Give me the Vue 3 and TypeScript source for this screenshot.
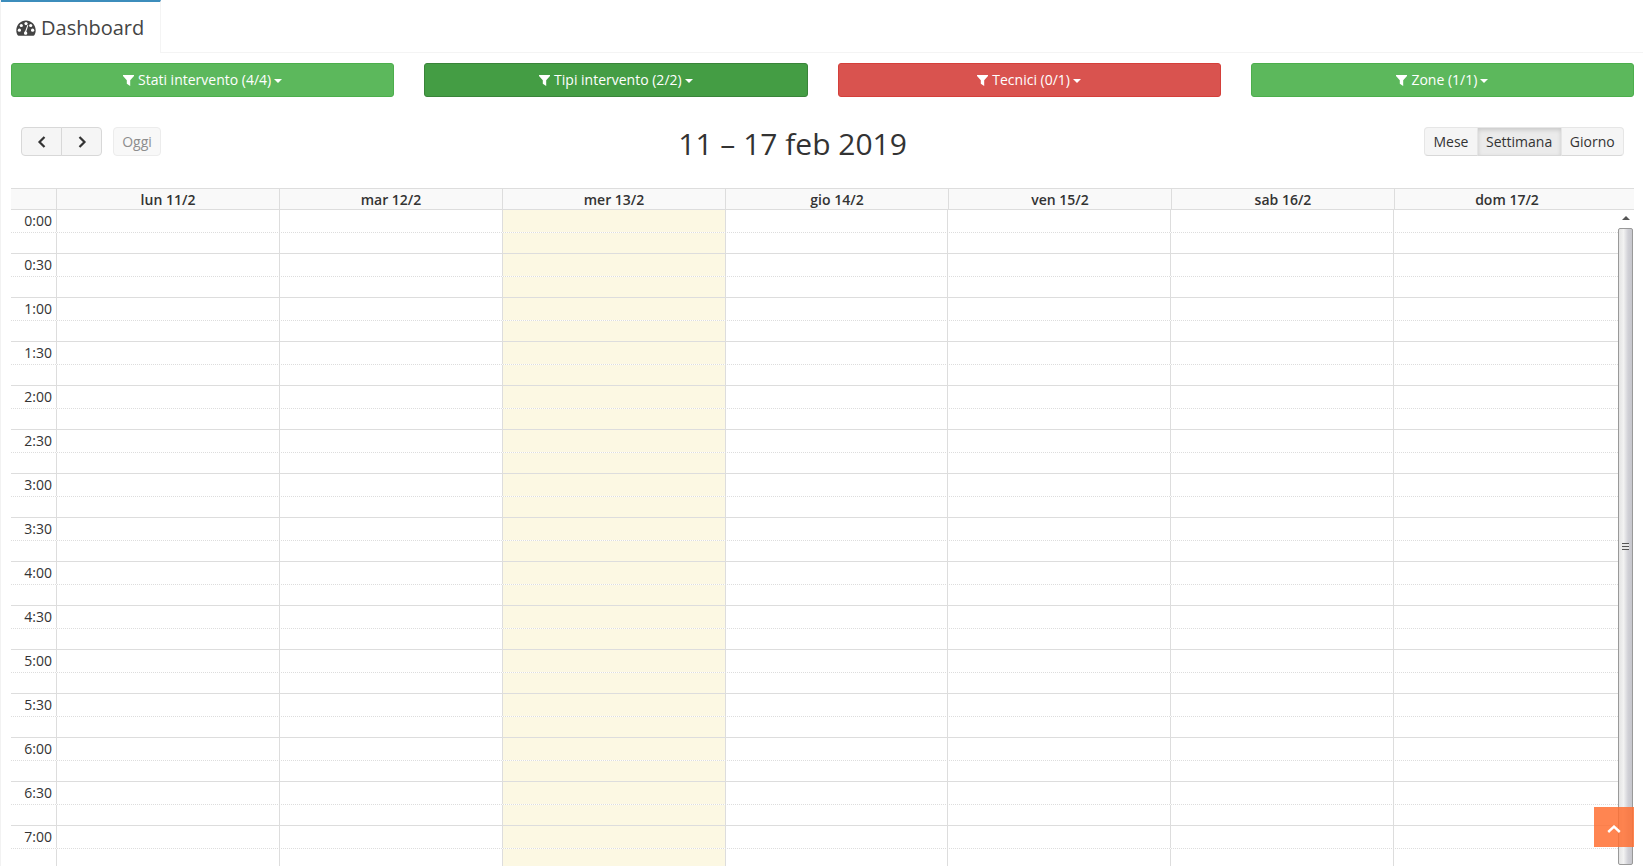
<template>
	<div class="page">
		<div class="tabs">
			<div class="tab">
				<svg class="dash-icon" viewBox="0 0 20 16" width="20" height="16">
					<path d="M10 0.5C4.6 0.5 0.3 4.8 0.3 10.2c0 1.9.5 3.6 1.4 5.1.2.3.5.4.8.4h15c.3 0 .6-.1.8-.4.9-1.5 1.4-3.2 1.4-5.1C19.7 4.8 15.4.5 10 .5z" fill="#444" />
					<g fill="#fff">
						<circle cx="10" cy="3.6" r="1.6" />
						<circle cx="5.3" cy="5.5" r="1.6" />
						<circle cx="3.4" cy="10.2" r="1.6" />
						<circle cx="16.6" cy="10.2" r="1.6" />
						<circle cx="14.7" cy="5.5" r="1.6" />
						<path d="M9.1 11.2 11.4 5l.9.3-2 6.2c.6.4 1 1 1 1.7 0 .9-.6 1.5-1.4 1.6-1.1.1-1.9-.6-1.9-1.6 0-.9.6-1.6 1.1-2z" />
					</g>
				</svg>
				<span>Dashboard</span>
			</div>
		</div>

		<div class="filters">
			<button v-for="f in filters" :key="f.label" class="filter-btn" :class="f.color">
				<svg viewBox="0 0 11 11" width="11" height="11" class="funnel">
					<path d="M0 0h11v1L7.2 5.2V11L3.8 8.8V5.2L0 1z" fill="#fff" />
				</svg>
				<span>{{ f.label }}</span>
				<i class="caret"></i>
			</button>
		</div>

		<div class="toolbar">
			<div class="toolbar-left">
				<div class="btn-group">
					<button class="fc-btn nav-btn">
						<svg viewBox="0 0 10 12" width="10" height="12"><path d="M7.5 1 2.5 6l5 5" fill="none" stroke="#333" stroke-width="2.2" /></svg>
					</button>
					<button class="fc-btn nav-btn">
						<svg viewBox="0 0 10 12" width="10" height="12"><path d="M2.5 1l5 5-5 5" fill="none" stroke="#333" stroke-width="2.2" /></svg>
					</button>
				</div>
				<button class="fc-btn today-btn" disabled>Oggi</button>
			</div>
			<h2 class="title">11 – 17 feb 2019</h2>
			<div class="btn-group">
				<button v-for="v in views" :key="v" class="fc-btn" :class="{ active: v === 'Settimana' }">{{ v }}</button>
			</div>
		</div>

		<div class="calendar">
			<div class="cal-head">
				<div class="head-axis"></div>
				<div v-for="d in days" :key="d" class="head-day">{{ d }}</div>
			</div>
			<div class="cal-body">
				<div class="slots">
					<div v-for="(s, i) in slots" :key="i" class="slot">
						<div class="axis">{{ s }}</div>
						<div v-for="n in 7" :key="n" class="cell" :class="{ today: n === 3 }"></div>
					</div>
				</div>
				<div class="scrollbar">
					<div class="sb-arrow"></div>
					<div class="sb-thumb"><div class="sb-grip"></div></div>
				</div>
			</div>
		</div>

		<button class="to-top">
			<svg viewBox="0 0 14 8" width="14" height="8"><path d="M1.2 7 7 1.6 12.8 7" fill="none" stroke="#fff" stroke-width="2.4" /></svg>
		</button>
	</div>
</template>

<script setup lang="ts">
const filters = [
	{ label: "Stati intervento (4/4)", color: "green" },
	{ label: "Tipi intervento (2/2)", color: "dark-green" },
	{ label: "Tecnici (0/1)", color: "red" },
	{ label: "Zone (1/1)", color: "green" },
];
const views = ["Mese", "Settimana", "Giorno"];
const days = ["lun 11/2", "mar 12/2", "mer 13/2", "gio 14/2", "ven 15/2", "sab 16/2", "dom 17/2"];

// half hour rows, each one split in two slots; the second slot has no label
const slots: string[] = [];
for (let i = 0; i < 15; i++) {
	slots.push(`${Math.floor(i / 2)}:${i % 2 ? "30" : "00"}`, "");
}
</script>

<style>
html,
body {
	margin: 0;
	height: 100%;
	overflow: hidden;
	background: #fff;
}
</style>

<style scoped>
.page {
	position: relative;
	height: 866px;
	overflow: hidden;
	box-sizing: border-box;
	padding-left: 1px;
	border-left: 1px solid #f2f2f2;
	font-family: "Open Sans", sans-serif;
	font-size: 14px;
	color: #333;
}

.tabs {
	height: 52px;
	border-bottom: 1px solid #f4f4f4;
}

.tab {
	width: 160px;
	height: 53px;
	box-sizing: border-box;
	margin-left: -1px;
	border-top: 2px solid #3c8dbc;
	border-right: 1px solid #f4f4f4;
	background: #fff;
	display: flex;
	align-items: center;
	padding: 0 0 0 15px;
	gap: 5px;
	font-size: 20px;
	color: #444;
}

.dash-icon {
	flex: none;
}

.filters {
	display: grid;
	grid-template-columns: repeat(4, 1fr);
	gap: 30px;
	padding: 10px 9px 0 9px;
}

.filter-btn {
	height: 34px;
	box-sizing: border-box;
	border-radius: 3px;
	border: 1px solid transparent;
	color: #fff;
	font-family: inherit;
	font-size: 14px;
	display: flex;
	align-items: center;
	justify-content: center;
	padding: 0 0 1px 0;
}

.funnel {
	margin-right: 4px;
	margin-top: 1px;
}

.green {
	background: #5cb85c;
	border-color: #4cae4c;
}

.dark-green {
	background: #449d44;
	border-color: #398439;
}

.red {
	background: #d9534f;
	border-color: #d43f3a;
}

.caret {
	display: inline-block;
	margin-left: 3px;
	margin-top: 2px;
	border-top: 4px solid #fff;
	border-left: 4px solid transparent;
	border-right: 4px solid transparent;
}

.toolbar {
	display: flex;
	justify-content: space-between;
	align-items: flex-start;
	padding: 30px 19px 0 19px;
	height: 61px;
}

.toolbar-left {
	display: flex;
	gap: 11px;
}

.btn-group {
	display: inline-flex;
}

.fc-btn {
	height: 29px;
	box-sizing: border-box;
	background: #f5f5f5;
	border: 1px solid #e6e6e6;
	border-bottom-color: #d8d8d8;
	color: #333;
	font-family: inherit;
	font-size: 14px;
	padding: 0 8.3px;
	display: inline-flex;
	align-items: center;
	justify-content: center;
}

.btn-group .fc-btn + .fc-btn {
	margin-left: -1px;
}

.btn-group .fc-btn:first-child {
	border-radius: 4px 0 0 4px;
}

.btn-group .fc-btn:last-child {
	border-radius: 0 4px 4px 0;
}

.nav-btn {
	width: 41px;
	padding: 0;
	border-color: #d8d8d8;
}

.today-btn {
	width: 48px;
	border-radius: 4px;
	padding: 0;
	color: #8d8d8d;
	background: #f8f8f8;
	border-color: #ececec;
}

.fc-btn.active {
	background: #ebebeb;
	box-shadow: inset 0 2px 4px rgba(0, 0, 0, 0.15);
}

.title {
	margin: -1px 0 0 0;
	font-size: 30px;
	font-weight: 400;
	line-height: 36px;
	color: #333;
}

.calendar {
	margin: 0 9px;
}

.cal-head {
	display: grid;
	grid-template-columns: 46px repeat(6, 223px) 1fr;
	height: 22px;
	box-sizing: border-box;
	border-top: 1px solid #ddd;
	border-bottom: 1px solid #ddd;
	background: #f9f9f9;
}

.head-axis,
.head-day {
	border-right: 1px solid #ddd;
}

.head-day {
	text-align: center;
	font-weight: 600;
	font-size: 14px;
	line-height: 21px;
	color: #333;
}

.head-day:last-child {
	border-right: 0;
	padding-right: 15px;
}

.cal-body {
	display: flex;
}

.slots {
	flex: 1;
	min-width: 0;
}

.slot {
	display: grid;
	grid-template-columns: 46px repeat(6, 222.86px) 1fr;
	box-sizing: border-box;
	height: 21px;
	border-bottom: 1px solid #ddd;
}

.slot:nth-child(odd) {
	height: 23px;
	border-bottom-style: dotted;
}

.axis {
	text-align: right;
	padding-right: 4px;
	border-right: 1px solid #ddd;
	font-size: 14px;
	line-height: 22px;
	white-space: nowrap;
}

.cell {
	border-right: 1px solid #ddd;
}

.cell:last-child {
	border-right: 0;
}

.today {
	background: #fcf8e3;
}

.scrollbar {
	flex: none;
	width: 16px;
	box-sizing: border-box;
	background: #fff;
}

.sb-arrow {
	height: 18px;
	position: relative;
}

.sb-arrow::after {
	content: "";
	position: absolute;
	left: 4px;
	top: 6px;
	border-bottom: 4px solid #555;
	border-left: 4px solid transparent;
	border-right: 4px solid transparent;
}

.sb-thumb {
	height: 637px;
	box-sizing: border-box;
	width: 15px;
	border: 1px solid #999;
	border-radius: 2px;
	background: linear-gradient(90deg, #e4e4e4, #f2f2f2 35%, #d0d0d6 70%, #c6c6cc);
	display: flex;
	align-items: center;
	justify-content: center;
}

.sb-grip {
	width: 7px;
	height: 7px;
	background: repeating-linear-gradient(180deg, #555 0 1px, #e8e8e8 1px 3px);
}

.to-top {
	position: absolute;
	right: 9px;
	bottom: 19px;
	width: 40px;
	height: 40px;
	padding: 4px 0 0 0;
	border: 0;
	background: rgba(255, 112, 50, 0.85);
	display: flex;
	align-items: center;
	justify-content: center;
}
</style>
